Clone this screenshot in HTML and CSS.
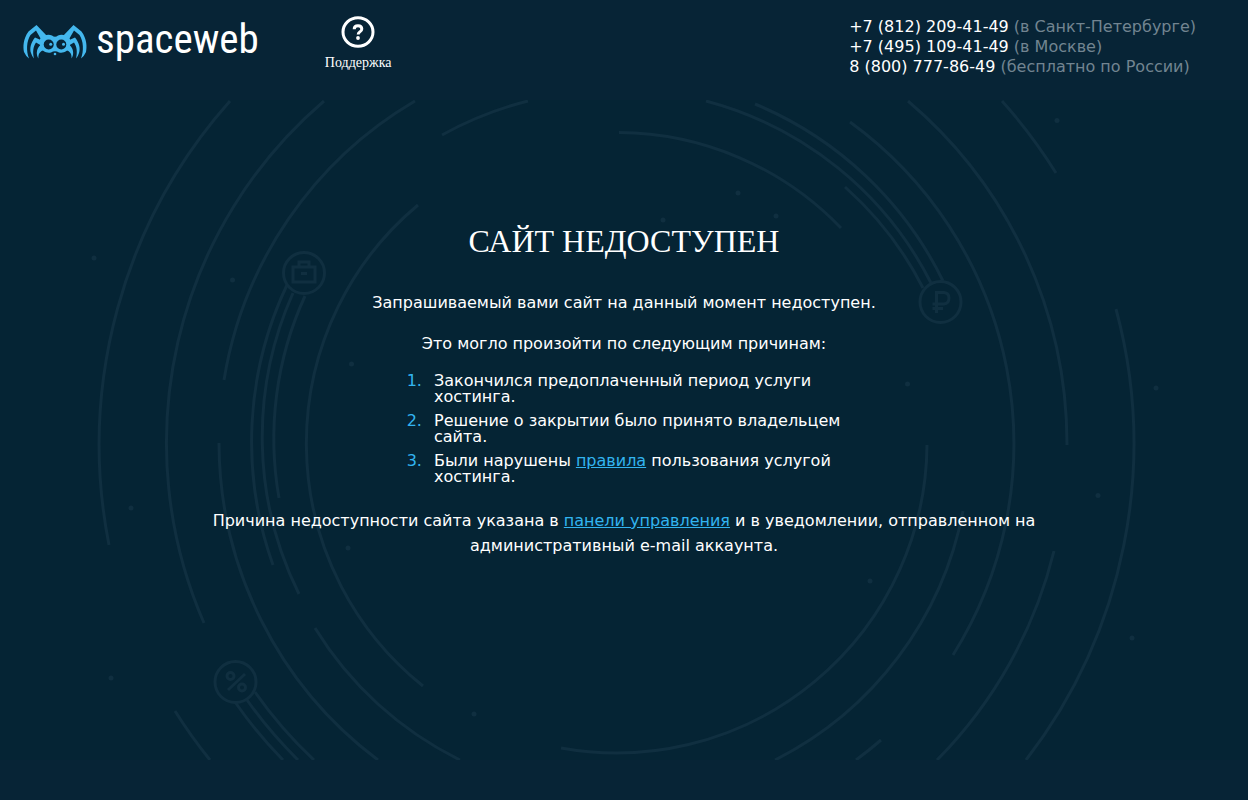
FILE: index.html
```html
<!DOCTYPE html>
<html lang="ru">
<head>
<meta charset="utf-8">
<title>Сайт недоступен</title>
<meta name="viewport" content="width=device-width, initial-scale=1">
<link rel="stylesheet" href="styles.css">
</head>
<body>
<header class="header">
  <a class="logo" href="#" aria-label="spaceweb">
    <svg class="logo-mark" viewBox="0 0 64 36" aria-hidden="true">
      <g fill="#44b8ee">
        <path d="M17 15 C21 11 25 10 29 11.500 Q32 14 35 11.500 C39 10 43 11 47 15 L47 22 C45 27 41 29.500 36 28.500 Q32 26 28 28.500 C23 29.500 19 27 17 22Z"/>
        <g id="legs">
          <path d="M24 12 L13.500 1 L5.500 7.500 C0 15 0 23 1 28 Q3 32.500 6 34.500 C3 27 3.500 17 7.500 11 L13 6.500 L19 17Z"/>
          <path d="M20 17 L12 13.500 C7.500 19 6.500 25 8 29 Q9 32.500 11 34.500 C9.500 28 10 23 13 18.500 L19 22Z"/>
          <path d="M17.500 21 C13 25 13 31 15.500 34.500 C15 30 17 27 21.500 26Z"/>
        </g>
        <use href="#legs" transform="matrix(-1 0 0 1 64 0)"/>
      </g>
      <g fill="#072436">
        <circle cx="25.700" cy="20.500" r="5"/><circle cx="38.300" cy="20.500" r="5"/>
      </g>
      <g fill="#44b8ee"><circle cx="27.700" cy="20.300" r="1.500"/><circle cx="40.500" cy="20.300" r="1.500"/><circle cx="32" cy="30" r="1.300"/></g>
    </svg>
    <span class="logo-text">spaceweb</span>
  </a>
  <a class="support" href="#">
    <svg class="support-icon" viewBox="0 0 34 32" aria-hidden="true">
      <ellipse cx="17" cy="16" rx="15" ry="14.200" fill="none" stroke="#fff" stroke-width="3"/>
      <path d="M13.200 13.200 Q13.200 9.700 17 9.700 Q20.800 9.700 20.800 13 Q20.800 14.800 18.700 16 Q17.200 16.900 17.200 18.600" fill="none" stroke="#fff" stroke-width="3"/>
      <circle cx="17" cy="22" r="1.900" fill="#fff"/>
    </svg>
    <span>Поддержка</span>
  </a>
  <address class="phones">
    <div>+7 (812) 209-41-49 <span class="note">(в Санкт-Петербурге)</span></div>
    <div>+7 (495) 109-41-49 <span class="note">(в Москве)</span></div>
    <div>8 (800) 777-86-49 <span class="note">(бесплатно по России)</span></div>
  </address>
</header>
<main class="main">
  <svg class="orbits" viewBox="0 100 1248 660" aria-hidden="true">
    <g class="lines">
      <path d="M418 205A310.500 310.500 0 0 0 423 686"/>
      <path d="M619 132.500A310.500 310.500 0 0 1 841 228"/>
      <path d="M927 445A310.500 310.500 0 0 1 561 748"/>
      <path d="M287 285A365 365 0 0 0 273 565"/>
      <path d="M293 293A353 353 0 0 0 299 594"/>
      <path d="M305 296A342 342 0 0 0 279 498"/>
      <path d="M755 104A365.500 365.500 0 0 1 943 281"/>
      <path d="M706 101A353.500 353.500 0 0 1 931 283"/>
      <path d="M845 187A343 343 0 0 1 923 288"/>
      <path d="M235 702A460.500 460.500 0 0 0 283 760"/>
      <path d="M247 700A449.500 449.500 0 0 0 298 760"/>
      <path d="M255 692A439 439 0 0 0 314 760"/>
      <path d="M230 101A517.500 517.500 0 0 0 109 545"/>
      <path d="M1116 309A517.500 517.500 0 0 1 1026 760"/>
      <path d="M175 711A517 517 0 0 0 210 760"/>
      <path d="M1002 101A516 516 0 0 1 1056 173"/>
      <path d="M324 101A450 450 0 0 0 204 623"/>
      <path d="M908 101A450 450 0 0 1 1067 445"/>
      <path d="M1054 551A450.500 450.500 0 0 1 937 760"/>
      <path d="M219 443A397.500 397.500 0 0 0 378 760"/>
      <path d="M415 101A397.500 397.500 0 0 0 224 380"/>
      <path d="M850 122A397.500 397.500 0 0 1 953 655"/>
      <path d="M881 740A397.500 397.500 0 0 1 856 760"/>
      <path d="M442 135A353.500 353.500 0 0 1 528 101"/>
      <path d="M315 628A353.500 353.500 0 0 0 460 760"/>
      <path d="M963 511A353.500 353.500 0 0 1 775 760"/>
      <circle cx="304" cy="273" r="20.500"/>
      <circle cx="940.500" cy="302" r="20.500"/>
      <circle cx="235.500" cy="682" r="20.500"/>
      <path d="M293 267H315V282H293ZM299 266V262H309V266M301 273.500H307"/>
      <path d="M936.500 313V292.500H944Q949 293 949 298Q949 303.500 944 304H932.500M932.500 308.500H943"/>
      <path d="M245 674L228 690"/>
      <circle cx="230.500" cy="676" r="3.500"/><circle cx="242" cy="687.500" r="3.500"/>
    </g>
    <g class="dots">
      <circle cx="94" cy="258" r="2.500"/><circle cx="232.500" cy="280" r="2.500"/><circle cx="351.500" cy="364" r="2.500"/><circle cx="131" cy="508" r="2.500"/>
      <circle cx="348" cy="548" r="2.500"/><circle cx="111" cy="678" r="2.500"/><circle cx="474" cy="714" r="2.500"/><circle cx="663" cy="220" r="2.500"/>
      <circle cx="738" cy="193" r="2.500"/><circle cx="776" cy="216" r="2.500"/><circle cx="1057" cy="120.500" r="2.500"/><circle cx="907.500" cy="384" r="2.500"/>
      <circle cx="1156" cy="388" r="2.500"/><circle cx="1098" cy="495.500" r="2.500"/><circle cx="870" cy="581" r="2.500"/><circle cx="1132" cy="638" r="2.500"/>
    </g>
  </svg>
  <div class="content">
    <h1 class="title">САЙТ НЕДОСТУПЕН</h1>
    <p class="text">Запрашиваемый вами сайт на данный момент недоступен.</p>
    <p class="text">Это могло произойти по следующим причинам:</p>
    <ol class="reasons">
      <li>Закончился предоплаченный период услуги хостинга.</li>
      <li>Решение о закрытии было принято владельцем сайта.</li>
      <li>Были нарушены <a href="#">правила</a> пользования услугой хостинга.</li>
    </ol>
    <p class="text">Причина недоступности сайта указана в <a href="#">панели управления</a> и в уведомлении, отправленном на административный e-mail аккаунта.</p>
  </div>
</main>
</body>
</html>
```
FILE: styles.css
```css
* { box-sizing: border-box; }
body {
  margin: 0;
  min-height: 100vh;
  background: #072436;
  color: #fff;
  font: 16px/20px Verdana, "DejaVu Sans", sans-serif;
}
a { color: #32b4f0; }
.header {
  display: flex;
  align-items: flex-start;
  min-height: 100px;
  padding: 16px 52px 0 23px;
}
.logo {
  display: flex;
  align-items: flex-start;
  gap: 9px;
  color: #fff;
  text-decoration: none;
}
.logo-mark { width: 64px; height: 36px; margin-top: 8px; }
.logo-text {
  font: 41px/46px "Liberation Sans Narrow", "Roboto Condensed", sans-serif;
}
.support {
  display: flex;
  flex-direction: column;
  align-items: center;
  gap: 7px;
  margin-left: 66px;
  color: #fff;
  font: 14px/16px "Liberation Serif", serif;
  text-decoration: none;
}
.support-icon { width: 34px; height: 32px; }
.phones {
  margin: 1px 0 0 auto;
  font-style: normal;
}
.note { color: #728491; }
.main {
  position: relative;
  min-height: 660px;
  padding: 121px 24px 0;
  background: #052434;
}
.orbits {
  position: absolute;
  inset: 0;
  width: 100%;
  height: 100%;
}
.lines { fill: none; stroke: #102f40; stroke-width: 3; }
.dots { fill: #102f40; }
.content {
  position: relative;
  max-width: 830px;
  margin: 0 auto;
  text-align: center;
}
.title {
  margin: 0 0 29px;
  font: 32px/40px "Liberation Serif", serif;
}
.text { margin: 0 0 16px; line-height: 25px; }
.reasons {
  max-width: 440px;
  margin: 17px auto 23px;
  padding: 0 0 0 23px;
  text-align: left;
  line-height: 16px;
}
.reasons li { margin-bottom: 8px; padding-left: 7px; }
.reasons li::marker { color: #32b4f0; }
```
